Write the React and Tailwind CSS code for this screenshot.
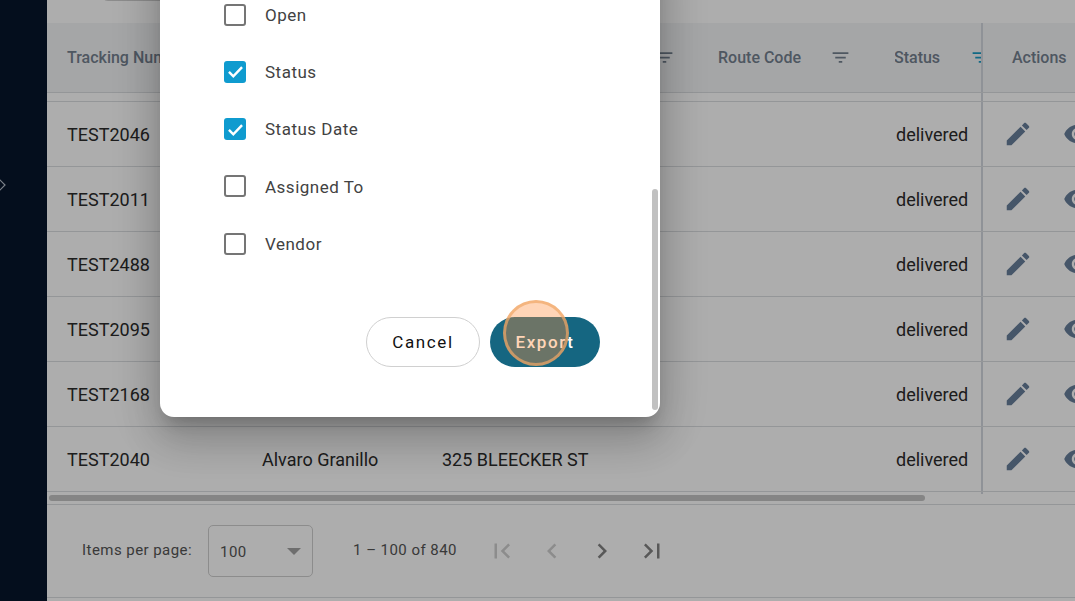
const rows = ["TEST2046","TEST2011","TEST2488","TEST2095","TEST2168","TEST2040"];
const FILTER = "M10 18h4v-2h-4v2zM3 6v2h18V6H3zm3 7h12v-2H6v2z";
const EDIT = "M3 17.25V21h3.75L17.81 9.94l-3.75-3.75L3 17.25zM20.71 7.04c.39-.39.39-1.02 0-1.41l-2.34-2.34c-.39-.39-1.02-.39-1.41 0l-1.83 1.83 3.75 3.75 1.83-1.83z";
const EYE = "M12 4.5C7 4.5 2.73 7.61 1 12c1.73 4.39 6 7.5 11 7.5s9.27-3.11 11-7.5c-1.73-4.39-6-7.5-11-7.5zM12 17c-2.76 0-5-2.24-5-5s2.24-5 5-5 5 2.24 5 5-2.24 5-5 5zm0-8c-1.66 0-3 1.34-3 3s1.34 3 3 3 3-1.34 3-3-1.34-3-3-3z";
const FIRST = "M18.41 16.59L13.82 12l4.59-4.59L17 6l-6 6 6 6zM6 6h2v12H6z";
const LEFT = "M15.41 7.41L14 6l-6 6 6 6 1.41-1.41L10.83 12z";
const RIGHT = "M10 6L8.59 7.41 13.17 12l-4.58 4.59L10 18l6-6z";
const LAST = "M5.59 7.41L10.18 12l-4.59 4.59L7 18l6-6-6-6zM16 6h2v12h-2z";

function Ic({ d, className }) {
  return <svg viewBox="0 0 24 24" className={className} fill="currentColor"><path d={d} /></svg>;
}

function Check({ label, checked }) {
  return (
    <label className="flex h-[57.25px] items-center gap-[19px] pl-[64px]">
      {checked ? (
        <span className="flex h-[22px] w-[22px] items-center justify-center rounded-[3px] bg-[#0f9bcf]">
          <svg viewBox="0 0 24 24" className="h-[21px] w-[21px]" fill="none" stroke="white" strokeWidth="2.8"><path d="M4.5 12.5l5 5L19.5 7" /></svg>
        </span>
      ) : (
        <span className="h-[22px] w-[22px] rounded-[3px] border-2 border-[#757575] bg-white" />
      )}
      <span className="pt-[2px] text-[17px] tracking-[0.5px] text-[#424242]">{label}</span>
    </label>
  );
}

export default function App() {
  return (
    <div className="relative flex h-[601px] w-[1075px] overflow-hidden bg-white font-['Roboto',sans-serif]">
      <aside className="flex w-[47px] shrink-0 items-center bg-[#07162c]">
        <svg viewBox="0 0 10 16" className="mb-[232px] ml-[-3px] h-[16px] w-[10px]" fill="none" stroke="#b8c0cc" strokeWidth="1.2"><path d="M2 2l6 6-6 6" /></svg>
      </aside>

      <main className="flex min-w-0 flex-1 flex-col bg-white">
        <div className="h-[23px] shrink-0 pl-[53px]">
          <div className="mt-[-9px] h-[10px] w-[120px] rounded-b-lg border border-[#cfcfcf]" />
        </div>

        <div className="grid h-[70px] shrink-0 grid-cols-[195px_180px_453px_86px_1fr] items-center border-b border-[#dadde1] bg-[#f4f5f7] pl-[20px] text-[16px] font-medium text-[#74818f]">
          <div>Tracking Number</div>
          <div />
          <div className="relative flex items-center">
            <Ic d={FILTER} className="absolute left-[212px] h-[21px] w-[21px]" />
            <span className="ml-[276px]">Route Code</span>
            <Ic d={FILTER} className="ml-[29px] h-[21px] w-[21px] shrink-0" />
          </div>
          <div className="flex items-center overflow-hidden whitespace-nowrap">
            <span className="ml-[-1px]">Status</span>
            <Ic d={FILTER} className="ml-[30px] h-[21px] w-[21px] shrink-0 text-[#1a9bc4]" />
          </div>
          <div className="flex h-full items-center border-l-2 border-[#d3d8df] pl-[29px]">Actions</div>
        </div>

        <div className="grid h-[9px] shrink-0 grid-cols-[934px_1fr] border-b border-[#dadde1]">
          <div />
          <div className="border-l-2 border-[#d3d8df]" />
        </div>

        {rows.map((r, i) => (
          <div key={r} className="grid h-[65px] shrink-0 grid-cols-[195px_180px_453px_86px_1fr] items-center border-b border-[#dadde1] pl-[20px] text-[18px] text-[#2b2b2b]">
            <div>{r}</div>
            <div>{i === 5 ? "Alvaro Granillo" : ""}</div>
            <div>{i === 5 ? "325 BLEECKER ST" : ""}</div>
            <div className="pl-[1px]">delivered</div>
            <div className="flex h-full items-center border-l-2 border-[#d3d8df] pl-[20px] text-[#687f9b]">
              <Ic d={EDIT} className="h-[30px] w-[30px] shrink-0" />
              <Ic d={EYE} className="ml-[30px] h-[30px] w-[30px] shrink-0" />
            </div>
          </div>
        ))}

        <div className="relative flex h-[13px] shrink-0 items-center border-b border-[#dadde1] pl-[2px]">
          <div className="h-[6px] w-[876px] rounded-full bg-[#c4c4c4]" />
          <div className="absolute left-[934px] top-0 h-[2px] w-[2px] bg-[#d3d8df]" />
        </div>

        <div className="flex h-[93px] shrink-0 items-center border-b border-[#dadde1] pl-[35px] text-[15px] tracking-[0.45px] text-[#555]">
          <span className="pb-[2px]">Items per page:</span>
          <div className="ml-[16px] flex h-[52px] w-[105px] items-center justify-between rounded-[5px] border border-[#cfcfcf] pl-[11px] pr-[11px] text-[15px]">
            <span className="pt-[2px]">100</span>
            <span className="h-0 w-0 border-x-[7px] border-t-[7px] border-x-transparent border-t-[#a3a3a3]" />
          </div>
          <span className="ml-[40px] pb-[2px]">1 – 100 of 840</span>
          <div className="ml-[30px] flex items-center gap-[20px]">
            <Ic d={FIRST} className="h-[30px] w-[30px] text-[#cecece]" />
            <Ic d={LEFT} className="h-[30px] w-[30px] text-[#cecece]" />
            <Ic d={RIGHT} className="h-[30px] w-[30px] text-[#828282]" />
            <Ic d={LAST} className="h-[30px] w-[30px] text-[#828282]" />
          </div>
        </div>
      </main>

      <div className="absolute inset-0 bg-black/32" />

      <div className="absolute left-[160px] top-[-60px] flex h-[477px] w-[500px] flex-col overflow-hidden rounded-[14px] bg-white shadow-[0_11px_15px_-7px_rgba(0,0,0,0.2),0_24px_38px_3px_rgba(0,0,0,0.14),0_9px_46px_8px_rgba(0,0,0,0.12)]">
        <div className="pt-[46px]">
          <Check label="Open" />
          <Check label="Status" checked />
          <Check label="Status Date" checked />
          <Check label="Assigned To" />
          <Check label="Vendor" />
        </div>
        <div className="mt-[45px] flex justify-end gap-[10px] pr-[60px]">
          <button className="h-[50px] w-[114px] rounded-full border border-[#d0d0d0] bg-white text-[17px] tracking-[1.6px] text-[#111]">Cancel</button>
          <button className="h-[50px] w-[110px] rounded-full bg-[#156681] text-[17px] font-medium tracking-[1.6px] text-white">Export</button>
        </div>
        <div className="absolute bottom-[7px] right-[2px] h-[221px] w-[6px] rounded-full bg-[#c1c1c1]" />
      </div>

      <div className="absolute left-[503px] top-[300px] h-[66px] w-[66px] rounded-full border-[3px] border-[#f0a868]/70 bg-[#ff8c3c]/37" />
    </div>
  );
}
